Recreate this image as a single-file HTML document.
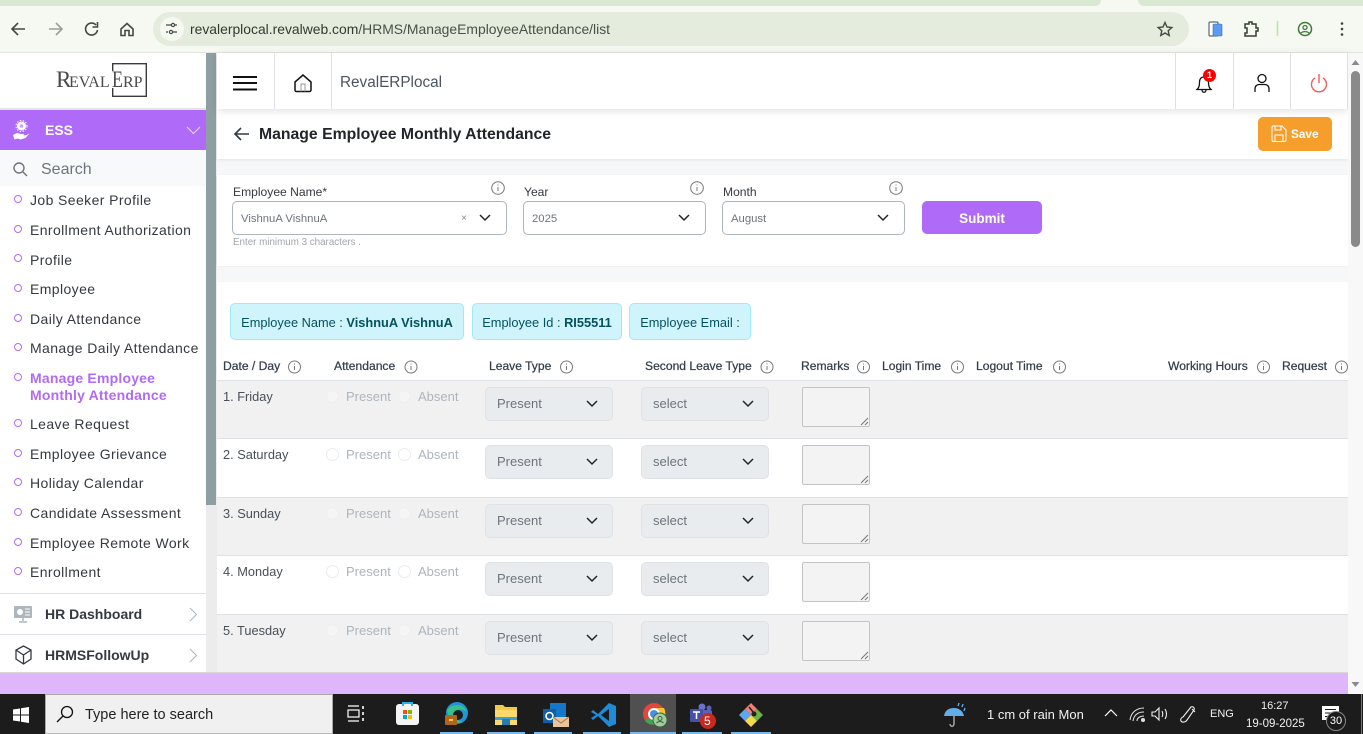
<!DOCTYPE html>
<html><head><meta charset="utf-8"><style>
html,body{margin:0;padding:0}
body{width:1363px;height:734px;overflow:hidden;position:relative;background:#fff;font-family:"Liberation Sans",sans-serif;color:#212529}
.a,.t,svg.i{position:absolute}
.t{white-space:nowrap;line-height:16px}
.side{font-size:14px;left:30px;color:#343a40;letter-spacing:.4px}
.dot{position:absolute;left:14px;width:6px;height:6px;border:1.5px solid #b06af8;border-radius:50%}
.th{font-size:12.1px;font-weight:400;color:#343f4b;top:358px;-webkit-text-stroke:.25px #343f4b}
.row{position:absolute;left:217px;width:1131px;border-bottom:1px solid #dee2e6}
.g{background:#f1f1f1}
.day{font-size:12.8px;left:223px;color:#495057}
.op{font-size:13px;color:#adb5bd}
.rd{position:absolute;width:11px;height:11px;border:1px solid #e9ecef;border-radius:50%;background:#fff}
.rg{background:#f5f5f5;border-color:#eeeeee}
.sel{position:absolute;width:126px;height:32px;background:#e9ecef;border:1px solid #dee2e6;border-radius:5px}
.sel span{position:absolute;left:11px;top:8px;font-size:13px;line-height:16px;color:#6c757d}
.ta{position:absolute;left:802px;width:66px;height:38px;border:1px solid #c4c4c4;border-radius:2px;background:#f3f3f3}
.inp{position:absolute;top:201px;height:32px;border:1px solid #adb5bd;border-radius:5px;background:#fff}
.inp span{position:absolute;left:8px;top:10px;font-size:11.300px;line-height:14px;color:#6c757d}
.lab{font-size:12.100px;top:184px;color:#343a40}
.chip{position:absolute;top:303px;height:35px;background:#cff4fc;border:1px solid #9eeaf9;border-radius:5px;font-size:12.800px;line-height:37px;color:#055160;text-align:center;white-space:nowrap}
.lg{font-family:"Liberation Serif",serif;line-height:26px;color:#4a4a4a}
</style></head><body>

<!-- browser chrome -->
<div class="a" style="left:0;top:0;width:1363px;height:53px;background:#f6f9f1;border-bottom:1px solid #e2e6dc;box-sizing:border-box"></div>
<div class="a" style="left:0;top:0;width:1101px;height:6px;background:#d9e8d2;border-radius:0 0 8px 0"></div>
<div class="a" style="left:1138px;top:0;width:225px;height:6px;background:#d9e8d2;border-radius:0 0 0 8px"></div>
<div class="a" style="left:153px;top:12px;width:1036px;height:34px;background:#e3ecdd;border-radius:17px"></div>
<div class="a" style="left:160px;top:17px;width:24px;height:24px;background:#f6f9f1;border-radius:50%"></div>
<svg class="i" style="left:0;top:0" width="1363" height="53" fill="none" stroke="#444a44" stroke-width="1.6">
<path d="M25 29H12M18 23l-6 6 6 6"/>
<path d="M49 29h13M56 23l6 6-6 6" stroke="#9a9f98"/>
<path d="M96 25a6 6 0 1 0 1.500 5M97.500 22v5h-5"/>
<path d="M121 29l6-5.500 6 5.500v6.500h-4v-5h-4v5h-4z"/>
<path d="M166 25h5M175 25h2M166 32h2M173 32h4" stroke-width="1.300"/><circle cx="173" cy="25" r="1.600" stroke-width="1.200"/><circle cx="171" cy="32" r="1.600" stroke-width="1.200"/>
<path d="M1165 22.500l2 4.500 4.800.5-3.600 3.200 1 4.800-4.200-2.500-4.200 2.500 1-4.800-3.600-3.200 4.800-.5z" stroke-width="1.400"/>
<rect x="1209" y="22" width="9" height="14" rx="1" stroke="#3c4a5a" fill="#fff" stroke-width="1"/><rect x="1213" y="24" width="9" height="12" rx="1" fill="#5b9bf0" stroke="#3c6cb0" stroke-width=".6"/>
<path d="M1245 24h4v-2h3v2h4v4h2v3h-2v5h-11v-3h2v-5h-2z" stroke="#33402f" stroke-width="1.500"/>
<path d="M1277.500 21v15" stroke="#bde3ae"/>
<circle cx="1305" cy="29" r="6.500" stroke="#3f7b3a" stroke-width="1.500"/><circle cx="1305" cy="27.500" r="2" stroke="#3f7b3a" stroke-width="1.300"/><path d="M1300.500 33.500c2-2.500 7-2.500 9 0" stroke="#3f7b3a" stroke-width="1.300"/>
<circle cx="1342" cy="23.500" r="1.300" fill="#3c403a" stroke="none"/><circle cx="1342" cy="29" r="1.300" fill="#3c403a" stroke="none"/><circle cx="1342" cy="34.500" r="1.300" fill="#3c403a" stroke="none"/>
</svg>
<div class="t" style="left:190px;top:21px;font-size:13.900px;color:#33392f">revalerplocal.revalweb.com<span style="color:#4a5048">/HRMS/ManageEmployeeAttendance/list</span></div>

<!-- sidebar -->
<div class="a" style="left:0;top:53px;width:206px;height:620px;background:#fff"></div>
<svg class="i" style="left:112px;top:63px" width="35" height="34" fill="none" stroke="#3a3a3a" stroke-width="1.400"><path d="M.7 8V.7H34.300V33.300H.7V25"/></svg>
<div class="t lg" style="left:56px;top:67px;font-size:23px">R</div>
<div class="t lg" style="left:69px;top:70px;font-size:16px">EVAL</div>
<div class="t lg" style="left:112px;top:67px;font-size:23px;transform:scaleX(.78);transform-origin:0 0">E</div>
<div class="t lg" style="left:123px;top:70px;font-size:16px">RP</div>

<div class="a" style="left:0;top:108px;width:206px;height:2px;background:#e4e4e8"></div>
<div class="a" style="left:0;top:110px;width:206px;height:40px;background:#b06af8"></div>
<svg class="i" style="left:11px;top:120px" width="20" height="22" fill="#fff"><circle cx="10.500" cy="6" r="4.500"/><circle cx="10.500" cy="6" r="5.500" fill="none" stroke="#fff" stroke-dasharray="1.500 1.500"/><circle cx="10.500" cy="6" r="1.800" fill="#c9a0f9"/><path d="M2 15l4-2 4 1 3 0-.5 1.500 3-.5 3-1.500-4 4.500-5 1.500-3-1-3 1z"/></svg>
<div class="t" style="left:45px;top:122px;font-size:14px;font-weight:700;color:#fff">ESS</div>
<svg class="i" style="left:186px;top:126px" width="15" height="9" fill="none" stroke="#e8d4fc" stroke-width="1"><path d="M1 1l6.500 6.500L14 1"/></svg>
<div class="a" style="left:0;top:151px;width:206px;height:35px;background:#f8f9fa"></div>
<svg class="i" style="left:12px;top:161px" width="16" height="16" fill="none" stroke="#6c757d" stroke-width="1.400"><circle cx="7" cy="7" r="5"/><path d="M11 11l4 4"/></svg>
<div class="t" style="left:41px;top:161px;font-size:16px;line-height:18px;color:#6c757d">Search</div>

<span class="dot" style="top:195px"></span><div class="t side" style="top:192px">Job Seeker Profile</div>
<span class="dot" style="top:225px"></span><div class="t side" style="top:222px">Enrollment Authorization</div>
<span class="dot" style="top:254px"></span><div class="t side" style="top:252px">Profile</div>
<span class="dot" style="top:284px"></span><div class="t side" style="top:281px">Employee</div>
<span class="dot" style="top:314px"></span><div class="t side" style="top:311px">Daily Attendance</div>
<span class="dot" style="top:343px"></span><div class="t side" style="top:340px">Manage Daily Attendance</div>
<span class="dot" style="top:373px"></span><div class="t side" style="top:370px;font-weight:700;color:#b06af8;line-height:17px;letter-spacing:.2px">Manage Employee<br>Monthly Attendance</div>
<span class="dot" style="top:419px"></span><div class="t side" style="top:416px">Leave Request</div>
<span class="dot" style="top:449px"></span><div class="t side" style="top:446px">Employee Grievance</div>
<span class="dot" style="top:478px"></span><div class="t side" style="top:475px">Holiday Calendar</div>
<span class="dot" style="top:508px"></span><div class="t side" style="top:505px">Candidate Assessment</div>
<span class="dot" style="top:538px"></span><div class="t side" style="top:535px">Employee Remote Work</div>
<span class="dot" style="top:567px"></span><div class="t side" style="top:564px">Enrollment</div>

<div class="a" style="left:0;top:593px;width:206px;height:1px;background:#dee2e6"></div>
<div class="a" style="left:0;top:634px;width:206px;height:1px;background:#dee2e6"></div>
<svg class="i" style="left:14px;top:605px" width="19" height="19"><rect x="0" y="1" width="18" height="12" rx="1" fill="#adb5bd"/><circle cx="6" cy="7" r="3" fill="#fff"/><path d="M11 4h5M11 7h5M11 10h5" stroke="#fff"/><path d="M9 13v3M5 17h8" stroke="#adb5bd" stroke-width="1.500"/></svg>
<div class="t" style="left:45px;top:606px;font-size:14px;font-weight:700;color:#343a40">HR Dashboard</div>
<svg class="i" style="left:189px;top:607px" width="9" height="15" fill="none" stroke="#adb5bd"><path d="M1 1l6.500 6.500L1 14"/></svg>
<svg class="i" style="left:15px;top:645px" width="17" height="20" fill="none" stroke="#343a40" stroke-width="1.300"><path d="M8.500 1L16 5v9l-7.500 5L1 14V5zM1 5l7.500 5L16 5M8.500 10v9"/></svg>
<div class="t" style="left:45px;top:647px;font-size:14px;font-weight:700;color:#343a40">HRMSFollowUp</div>
<svg class="i" style="left:189px;top:648px" width="9" height="15" fill="none" stroke="#adb5bd"><path d="M1 1l6.500 6.500L1 14"/></svg>

<!-- sidebar scroll -->
<div class="a" style="left:206px;top:53px;width:11px;height:620px;background:#ececec"></div>
<div class="a" style="left:206px;top:53px;width:10px;height:452px;background:#8e9fa3"></div>

<!-- top bar -->
<div class="a" style="left:217px;top:53px;width:1131px;height:56px;background:#fff;box-shadow:0 2px 8px rgba(0,0,0,.12);z-index:2"></div>
<div style="z-index:3;position:absolute;left:0;top:0">
<div class="a" style="left:274px;top:53px;width:1px;height:56px;background:#e2e2e8"></div>
<div class="a" style="left:331px;top:53px;width:1px;height:56px;background:#e2e2e8"></div>
<div class="a" style="left:1175px;top:53px;width:1px;height:56px;background:#e0e0e0"></div>
<div class="a" style="left:1233px;top:53px;width:1px;height:56px;background:#e0e0e0"></div>
<div class="a" style="left:1290px;top:53px;width:1px;height:56px;background:#e0e0e0"></div>
<div class="a" style="left:1347px;top:53px;width:1px;height:56px;background:#e0e0e0"></div>
<svg class="i" style="left:233px;top:76px" width="24" height="15" stroke="#111" stroke-width="2"><path d="M0 1h24M0 7h24M0 13.500h24"/></svg>
<svg class="i" style="left:293px;top:74px" width="20" height="19" fill="none" stroke="#111" stroke-width="1.500"><path d="M2 8l8-7 8 7v8a1.500 1.500 0 0 1-1.500 1.500h-13A1.500 1.500 0 0 1 2 16z"/><path d="M8 17.500V10h4v7.500" stroke="#999" stroke-width="1"/></svg>
<div class="t" style="left:340px;top:73px;font-size:15.300px;line-height:19px;color:#4a5560">RevalERPlocal</div>
<svg class="i" style="left:1194px;top:74px" width="20" height="20" fill="none" stroke="#111" stroke-width="1.300"><path d="M10 3c-3 0-4.500 2-4.500 5 0 4-.5 5.500-2.500 7.500h14c-2-2-2.500-3.500-2.500-7.500 0-3-1.500-5-4.500-5zM8 16c0 3 4 3 4 0"/></svg>
<div class="a" style="left:1203px;top:69px;width:13px;height:13px;background:#f00;border-radius:50%;color:#fff;font-size:9px;font-weight:700;line-height:13px;text-align:center">1</div>
<svg class="i" style="left:1253px;top:73px" width="18" height="20" fill="none" stroke="#111" stroke-width="1.300"><circle cx="9" cy="5.500" r="4"/><path d="M2 19v-3c0-3 2-4.500 4-4.500h6c2 0 4 1.500 4 4.500v3"/></svg>
<svg class="i" style="left:1310px;top:73px" width="18" height="20" fill="none" stroke="#f45b5b" stroke-width="1.400"><path d="M9 1v9M5 5a7.500 7.500 0 1 0 8 0"/></svg>
</div>

<!-- title -->
<div class="a" style="left:217px;top:109px;width:1131px;height:50px;background:#fff;box-shadow:0 1px 3px rgba(0,0,0,.08);z-index:1"></div>
<div class="a" style="left:217px;top:159px;width:1131px;height:16px;background:#f6f7f9"></div>
<svg class="i" style="left:234px;top:127px;z-index:2" width="16" height="14" fill="none" stroke="#343a40" stroke-width="1.600"><path d="M15 7H1.500M7 1L1 7l6 6"/></svg>
<div class="t" style="left:259px;top:126px;font-size:15.770px;line-height:18px;font-weight:700;color:#212529;z-index:2">Manage Employee Monthly Attendance</div>
<div class="a" style="left:1258px;top:117px;width:74px;height:34px;background:#f59e2b;border-radius:5px;z-index:2"></div>
<svg class="i" style="left:1271px;top:125px;z-index:3" width="16" height="17" fill="none" stroke="#fff" stroke-width="1"><path d="M1 2.500A1.500 1.500 0 0 1 2.500 1H11l4 4v10a1.500 1.500 0 0 1-1.500 1.500h-11A1.500 1.500 0 0 1 1 15z"/><path d="M4 1v4h6V1M4 16v-6h8v6"/></svg>
<div class="t" style="left:1291px;top:126px;font-size:11.800px;font-weight:700;color:#fff;z-index:3">Save</div>

<!-- form -->
<div class="a" style="left:217px;top:175px;width:1131px;height:91px;background:#fff;box-shadow:0 1px 3px rgba(0,0,0,.1)"></div>
<div class="a" style="left:217px;top:267px;width:1131px;height:15px;background:#f6f7f9"></div>
<div class="t lab" style="left:233px">Employee Name*</div>
<div class="t lab" style="left:524px">Year</div>
<div class="t lab" style="left:723px">Month</div>
<div class="inp" style="left:232px;width:273px"><span>VishnuA VishnuA</span><span style="left:228px;top:10px;font-size:10px;color:#888">×</span></div>
<div class="inp" style="left:523px;width:181px"><span>2025</span></div>
<div class="inp" style="left:722px;width:181px"><span>August</span></div>
<div class="t" style="left:233px;top:235px;font-size:9.800px;color:#a0a5aa">Enter minimum 3 characters .</div>
<div class="a" style="left:922px;top:201px;width:120px;height:33px;background:#b06af8;border-radius:5px;color:#fff;font-size:13.500px;font-weight:700;line-height:35px;text-align:center">Submit</div>

<!-- chips -->
<div class="chip" style="left:230px;width:232px">Employee Name : <b>VishnuA VishnuA</b></div>
<div class="chip" style="left:472px;width:148px">Employee Id : <b>RI55511</b></div>
<div class="chip" style="left:629px;width:120px">Employee Email :</div>

<!-- table head -->
<div class="t th" style="left:223px">Date / Day</div>
<div class="t th" style="left:334px">Attendance</div>
<div class="t th" style="left:489px">Leave Type</div>
<div class="t th" style="left:645px">Second Leave Type</div>
<div class="t th" style="left:801px">Remarks</div>
<div class="t th" style="left:882px">Login Time</div>
<div class="t th" style="left:976px">Logout Time</div>
<div class="t th" style="left:1168px">Working Hours</div>
<div class="t th" style="left:1282px">Request</div>
<div class="a" style="left:217px;top:380px;width:1131px;height:1px;background:#dee2e6"></div>

<!-- rows -->
<div class="row g" style="top:381px;height:57px"></div>
<div class="row" style="top:439px;height:58px"></div>
<div class="row g" style="top:498px;height:57px"></div>
<div class="row" style="top:556px;height:58px"></div>
<div class="row g" style="top:615px;height:57px"></div>

<div class="t day" style="top:389px">1. Friday</div><span class="rd rg" style="left:326px;top:390px"></span><div class="t op" style="left:346px;top:389px">Present</div><span class="rd rg" style="left:398px;top:390px"></span><div class="t op" style="left:418px;top:389px">Absent</div>
<div class="sel" style="left:485px;top:387px"><span>Present</span></div><div class="sel" style="left:641px;top:387px"><span>select</span></div><div class="ta" style="top:387px"></div>

<div class="t day" style="top:447px">2. Saturday</div><span class="rd" style="left:326px;top:448px"></span><div class="t op" style="left:346px;top:447px">Present</div><span class="rd" style="left:398px;top:448px"></span><div class="t op" style="left:418px;top:447px">Absent</div>
<div class="sel" style="left:485px;top:445px"><span>Present</span></div><div class="sel" style="left:641px;top:445px"><span>select</span></div><div class="ta" style="top:445px"></div>

<div class="t day" style="top:506px">3. Sunday</div><span class="rd rg" style="left:326px;top:507px"></span><div class="t op" style="left:346px;top:506px">Present</div><span class="rd rg" style="left:398px;top:507px"></span><div class="t op" style="left:418px;top:506px">Absent</div>
<div class="sel" style="left:485px;top:504px"><span>Present</span></div><div class="sel" style="left:641px;top:504px"><span>select</span></div><div class="ta" style="top:504px"></div>

<div class="t day" style="top:564px">4. Monday</div><span class="rd" style="left:326px;top:565px"></span><div class="t op" style="left:346px;top:564px">Present</div><span class="rd" style="left:398px;top:565px"></span><div class="t op" style="left:418px;top:564px">Absent</div>
<div class="sel" style="left:485px;top:562px"><span>Present</span></div><div class="sel" style="left:641px;top:562px"><span>select</span></div><div class="ta" style="top:562px"></div>

<div class="t day" style="top:623px">5. Tuesday</div><span class="rd rg" style="left:326px;top:624px"></span><div class="t op" style="left:346px;top:623px">Present</div><span class="rd rg" style="left:398px;top:624px"></span><div class="t op" style="left:418px;top:623px">Absent</div>
<div class="sel" style="left:485px;top:621px"><span>Present</span></div><div class="sel" style="left:641px;top:621px"><span>select</span></div><div class="ta" style="top:621px"></div>

<!-- chevrons, info icons, textarea grips -->
<svg class="i" style="left:0;top:0;z-index:4" width="1363" height="694" fill="none">
<g stroke="#212529" stroke-width="1.500">
<path d="M480 215l5 5 5-5M679 215l5 5 5-5M878 215l5 5 5-5"/>
<path d="M587 401l5 5 5-5M743 401l5 5 5-5M587 459l5 5 5-5M743 459l5 5 5-5M587 518l5 5 5-5M743 518l5 5 5-5M587 576l5 5 5-5M743 576l5 5 5-5M587 635l5 5 5-5M743 635l5 5 5-5"/>
</g>
<g stroke="#777" stroke-width="1">
<path d="M861 425l7-7M865 425l3-3M861 483l7-7M865 483l3-3M861 542l7-7M865 542l3-3M861 600l7-7M865 600l3-3M861 659l7-7M865 659l3-3"/>
<circle cx="498" cy="188" r="6.300"/><path d="M498 187v4M498 184.500v1"/>
<circle cx="697" cy="188" r="6.300"/><path d="M697 187v4M697 184.500v1"/>
<circle cx="896" cy="188" r="6.300"/><path d="M896 187v4M896 184.500v1"/>
<circle cx="294.500" cy="367" r="6"/><path d="M294.500 366v4M294.500 363.500v1"/>
<circle cx="411" cy="367" r="6"/><path d="M411 366v4M411 363.500v1"/>
<circle cx="566.500" cy="367" r="6"/><path d="M566.500 366v4M566.500 363.500v1"/>
<circle cx="767" cy="367" r="6"/><path d="M767 366v4M767 363.500v1"/>
<circle cx="863.500" cy="367" r="6"/><path d="M863.500 366v4M863.500 363.500v1"/>
<circle cx="957.500" cy="367" r="6"/><path d="M957.500 366v4M957.500 363.500v1"/>
<circle cx="1059.500" cy="367" r="6"/><path d="M1059.500 366v4M1059.500 363.500v1"/>
<circle cx="1263.500" cy="367" r="6"/><path d="M1263.500 366v4M1263.500 363.500v1"/>
<circle cx="1341.500" cy="367" r="6"/><path d="M1341.500 366v4M1341.500 363.500v1"/>
</g>
</svg>

<!-- purple bar -->
<div class="a" style="left:0;top:672px;width:1348px;height:1px;background:#d8d8d8;z-index:5"></div>
<div class="a" style="left:0;top:673px;width:1348px;height:21px;background:#dfb6fb;z-index:5"></div>

<!-- page scroll -->
<div class="a" style="left:1348px;top:53px;width:15px;height:641px;background:#f8f8f8;z-index:5"></div>
<div class="a" style="left:1351px;top:71px;width:9px;height:176px;background:#8a8a8a;border-radius:5px;z-index:6"></div>
<svg class="i" style="left:1348px;top:53px;z-index:6" width="15" height="641" fill="#8a8a8a"><path d="M3.500 12L7.500 7 11.500 12zM3.500 629L7.500 634 11.500 629z"/></svg>

<!-- taskbar -->
<div class="a" style="left:0;top:694px;width:1363px;height:40px;background:#1c1c1c;z-index:7"></div>
<div style="position:absolute;left:0;top:0;z-index:8">
<svg class="i" style="left:13px;top:707px" width="16" height="16" fill="#fff"><path d="M0 2.500L7 1.500V7.500H0zM8 1.300L16 0V7.500H8zM0 8.500H7V14.500L0 13.500zM8 8.500H16V16L8 14.700z"/></svg>
<div class="a" style="left:45px;top:694px;width:288px;height:40px;background:#f0f0f0;box-sizing:border-box;border:1px solid #aaa;border-bottom:1px solid #bbb"></div>
<svg class="i" style="left:56px;top:705px" width="18" height="18" fill="none" stroke="#111" stroke-width="1.300"><circle cx="11" cy="7" r="5.500"/><path d="M7 11l-6 6"/></svg>
<div class="t" style="left:85px;top:706px;font-size:14.500px;line-height:18px;color:#222">Type here to search</div>
<svg class="i" style="left:347px;top:705px" width="20" height="20" fill="none" stroke="#fff" stroke-width="1.200"><path d="M1 1h11M1 16h11"/><rect x="1" y="5" width="11" height="7"/><path d="M16 1v3M16 7v3M16 13v3" stroke-width="1.600"/></svg>
<div class="a" style="left:396px;top:704px;width:23px;height:21px;background:#f4f4f4;border-radius:3px"></div>
<svg class="i" style="left:396px;top:700px" width="23" height="25"><path d="M7 6V3h9v3" fill="none" stroke="#2bb0e8" stroke-width="2"/><rect x="7" y="10" width="4" height="4" fill="#f25022"/><rect x="12" y="10" width="4" height="4" fill="#7fba00"/><rect x="7" y="15" width="4" height="4" fill="#00a4ef"/><rect x="12" y="15" width="4" height="4" fill="#ffb900"/></svg>
<svg class="i" style="left:444px;top:701px" width="26" height="26"><circle cx="13" cy="12" r="11" fill="#1f95d6"/><path d="M3 9C8 2 20 2 23 11c-5-4-11-3-12 2-1 4 3 7 8 8-8 3-14-2-16-12z" fill="#36c18a"/><circle cx="14" cy="14" r="5" fill="#1c1c1c"/><rect x="1" y="14" width="12" height="10" rx="1" fill="#b1651b"/><rect x="5" y="18" width="4" height="2" fill="#f4c05a"/></svg>
<svg class="i" style="left:495px;top:705px" width="22" height="20"><path d="M0 0h8l2 2h12v6H0z" fill="#f6c945"/><rect y="5" width="22" height="15" fill="#fbd96a"/><rect x="0" y="12" width="22" height="3" fill="#3aa1d8"/><rect x="7" y="14" width="8" height="6" fill="#2a7ab0"/></svg>
<svg class="i" style="left:542px;top:702px" width="28" height="26"><rect x="8" y="1" width="16" height="14" fill="#1676c8"/><rect x="1" y="7" width="13" height="14" fill="#0f5fa8"/><circle cx="7.500" cy="14" r="3.500" fill="none" stroke="#fff" stroke-width="1.600"/><rect x="11" y="15" width="16" height="10" fill="#e9c39b"/><path d="M11 15l8 6 8-6" fill="none" stroke="#a8764a"/></svg>
<svg class="i" style="left:591px;top:702px" width="26" height="26"><path d="M18 1l7 3v18l-7 3L7 14 2 18 0 16l5-3-5-3 2-2 5 4z" fill="#1f8ad6"/><path d="M18 7v12l-8-6z" fill="#1c1c1c"/></svg>
<div class="a" style="left:630px;top:694px;width:46px;height:40px;background:#505050"></div>
<svg class="i" style="left:642px;top:702px" width="26" height="26"><circle cx="12" cy="12" r="11" fill="#e0483a"/><path d="M12 12L3 19a11 11 0 0 0 12 3z" fill="#3aa757"/><path d="M12 6h10a11 11 0 0 1-7 16z" fill="#f9c22e"/><circle cx="12" cy="12" r="5" fill="#4a90e2" stroke="#fff" stroke-width="2"/><circle cx="18" cy="18" r="7" fill="#a9c8a2" stroke="#2f6b3a"/><circle cx="18" cy="16.500" r="2" fill="none" stroke="#2f6b3a"/><path d="M14.500 21c2-2 5-2 7 0" fill="none" stroke="#2f6b3a"/></svg>
<svg class="i" style="left:688px;top:702px" width="30" height="28"><circle cx="14" cy="5" r="3.500" fill="#6a72c9"/><circle cx="21" cy="6" r="2.500" fill="#5a62b8"/><rect x="10" y="8" width="14" height="12" rx="2" fill="#5a62b8"/><rect x="2" y="7" width="13" height="13" rx="1" fill="#4650a8"/><path d="M5 10h7M8.500 10v7" stroke="#fff" stroke-width="1.500"/><circle cx="20" cy="19" r="8" fill="#c9281f"/></svg>
<div class="t" style="left:704px;top:713px;font-size:12px;line-height:16px;color:#fff">5</div>
<svg class="i" style="left:738px;top:702px" width="26" height="26"><path d="M13 1L19 7 13 13 7 7z" fill="#f07f7a"/><path d="M1 13L7 7 13 13 7 19z" fill="#5fa8f0"/><path d="M13 13L19 7 25 13 19 19z" fill="#6db33f"/><path d="M7 19L13 13 19 19 13 25z" fill="#f4d94a"/><path d="M11 5l5 6" stroke="#222" stroke-width="1.500"/><circle cx="16" cy="12" r="2.500" fill="#222"/></svg>
<div class="a" style="left:440px;top:732px;width:33px;height:2px;background:#76b9ed"></div>
<div class="a" style="left:487px;top:732px;width:38px;height:2px;background:#76b9ed"></div>
<div class="a" style="left:534px;top:732px;width:38px;height:2px;background:#76b9ed"></div>
<div class="a" style="left:583px;top:732px;width:38px;height:2px;background:#76b9ed"></div>
<div class="a" style="left:630px;top:732px;width:46px;height:2px;background:#76b9ed"></div>
<div class="a" style="left:682px;top:732px;width:40px;height:2px;background:#76b9ed"></div>
<div class="a" style="left:731px;top:732px;width:40px;height:2px;background:#76b9ed"></div>

<svg class="i" style="left:942px;top:701px" width="26" height="27" fill="none"><path d="M2 15c1-6 5-8 10-8s9 3 10 8z" fill="#62aee8"/><path d="M12 15v8c0 3-4 3-4 0" stroke="#bbb" stroke-width="1.300"/><path d="M17 2l-1 3M21 3l-1 3M23 7l-1 3" stroke="#62aee8" stroke-width="1.300"/></svg>
<div class="t" style="left:987px;top:706px;font-size:13px;line-height:17px;color:#f2f2f2">1 cm of rain Mon</div>
<svg class="i" style="left:1104px;top:708px" width="14" height="10" fill="none" stroke="#fff" stroke-width="1.200"><path d="M1 8l6-6 6 6"/></svg>
<svg class="i" style="left:1129px;top:706px" width="17" height="17" fill="none" stroke="#ddd" stroke-width="1.100"><path d="M1 14C2 6 8 2 15 2M4 15C5 9 9 6 15 6M8 15c0-3 3-5 7-5"/><circle cx="14" cy="14" r="1.500" fill="#ddd"/></svg>
<svg class="i" style="left:1151px;top:705px" width="18" height="18" fill="none" stroke="#eee" stroke-width="1.100"><path d="M1 7h3l4-4v12l-4-4H1zM11 6c1 2 1 4 0 6M14 4c2 3 2 7 0 10"/></svg>
<svg class="i" style="left:1180px;top:705px" width="18" height="19" fill="none" stroke="#eee" stroke-width="1.100"><path d="M3 12L11 2c2-1 4 1 3 3L7 15c-1 2-5 3-6 1s1-4 2-4zM12 4l3 3"/></svg>
<div class="t" style="left:1210px;top:706px;font-size:11px;color:#f2f2f2">ENG</div>
<div class="t" style="left:1261px;top:698px;font-size:11px;color:#f2f2f2">16:27</div>
<div class="t" style="left:1246px;top:716px;font-size:11.500px;color:#f2f2f2">19-09-2025</div>
<svg class="i" style="left:1322px;top:706px" width="17" height="14"><rect width="17" height="14" fill="#fff"/><path d="M3 3.500h11M3 7h11M3 10.500h8" stroke="#1c1c1c"/></svg>
<div class="a" style="left:1326px;top:711px;width:20px;height:20px;border-radius:50%;background:#1c1c1c;border:1px solid #888;box-sizing:border-box;color:#fff;font-size:11px;line-height:18px;text-align:center">30</div>
<div class="a" style="left:1361px;top:694px;width:1px;height:40px;background:#777"></div>
</div>

</body></html>
